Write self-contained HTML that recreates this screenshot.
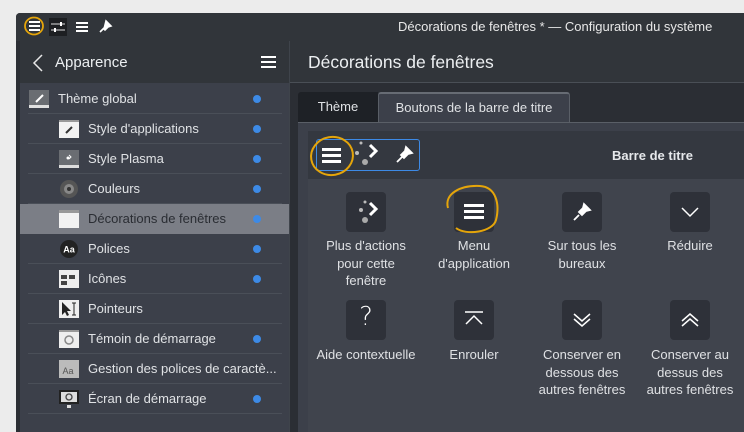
<!DOCTYPE html>
<html><head><meta charset="utf-8"><style>
*{margin:0;padding:0;box-sizing:border-box}
body{width:744px;height:432px;overflow:hidden;background:#ececec;font-family:"Liberation Sans","DejaVu Sans",sans-serif;color:#e0e2e5;position:relative}
.a{position:absolute}
.win{left:16px;top:13px;width:728px;height:419px;background:#2b2e34;border-radius:4px 0 0 0}
.tb{left:16px;top:13px;width:728px;height:28px;background:#31353a;border-radius:4px 0 0 0}
.sh{left:20px;top:41px;width:269px;height:42px;background:#31353a}
.mh{left:290px;top:41px;width:454px;height:42px;background:#31353a;border-bottom:1px solid #4a4f56}
.list{left:20px;top:83px;width:269px;height:349px;background:#3c404a}
.row{position:absolute;left:0;width:269px;height:30px;font-size:13px;line-height:30px}
.row .sep{position:absolute;left:8px;right:7px;bottom:0;height:1px;background:#4a4f58}
.row .t{position:absolute;top:0}
.dot{position:absolute;left:233px;top:11px;width:8px;height:8px;border-radius:50%;background:#3d8ae6}
.ic{position:absolute;top:6px;width:20px;height:18px}
.tile{position:absolute;width:40px;height:40px;background:#2e3139;border-radius:4px}
.lbl{position:absolute;width:92px;text-align:center;font-size:13px;line-height:17.5px;color:#dfe1e4}
</style></head><body>
<div class="a win"></div>
<div class="a tb"></div>
<svg class="a" style="left:20px;top:14px" width="100" height="26">
<ellipse cx="14" cy="12" rx="9" ry="8.5" fill="none" stroke="#e5a50a" stroke-width="1.8"/>
<g fill="#fff"><rect x="9" y="7" width="11" height="2"/><rect x="9" y="11" width="11" height="2"/><rect x="9" y="15" width="11" height="2"/></g>
<rect x="29" y="4" width="18" height="18" fill="#1d1f22"/>
<g stroke="#ddd" stroke-width="1"><line x1="31" y1="10" x2="45" y2="10"/><line x1="31" y1="16" x2="45" y2="16"/></g>
<rect x="40" y="8" width="2" height="4" fill="#fff"/><rect x="34" y="14" width="2" height="4" fill="#fff"/>
<g fill="#fff"><rect x="56" y="8" width="12" height="2"/><rect x="56" y="12" width="12" height="2"/><rect x="56" y="16" width="12" height="2"/></g>
<path d="M86 7l5 5-3 1-3 3-1-1z M84 14l-4 4" stroke="#fff" stroke-width="1.6" fill="#fff"/>
</svg>
<div class="a" style="left:398px;top:19px;font-size:13px;color:#e8e8e8;white-space:nowrap">Décorations de fenêtres * — Configuration du système</div>
<div class="a sh"></div>
<div class="a mh"></div>
<div class="a" style="left:289px;top:41px;width:1px;height:391px;background:#3f444b"></div>
<svg class="a" style="left:30px;top:53px" width="16" height="20"><path d="M12 2L4 10l8 8" fill="none" stroke="#e8e8e8" stroke-width="1.5"/></svg>
<div class="a" style="left:55px;top:54px;font-size:15px;color:#eceff1">Apparence</div>
<svg class="a" style="left:260px;top:55px" width="18" height="16"><g fill="#fff"><rect x="1" y="1" width="15" height="2"/><rect x="1" y="6" width="15" height="2"/><rect x="1" y="11" width="15" height="2"/></g></svg>
<div class="a" style="left:308px;top:52px;font-size:17.5px;color:#eceff1">Décorations de fenêtres</div>

<div class="a list">
<div class="row" style="top:1px"><svg class="ic" style="left:9px" viewBox="0 0 20 18"><rect width="20" height="18" fill="#6a6d72"/><rect y="15" width="20" height="3" fill="#e0e0e0"/><path d="M7 12l7-7" stroke="#fff" stroke-width="2"/></svg><span class="t" style="left:38px">Thème global</span><span class="dot"></span><span class="sep"></span></div>
<div class="row" style="top:31px"><svg class="ic" style="left:39px" viewBox="0 0 20 18"><rect width="20" height="18" fill="#f2f2f2"/><rect width="20" height="2" fill="#999"/><path d="M7 13l6-6" stroke="#333" stroke-width="2"/></svg><span class="t" style="left:68px">Style d'applications</span><span class="dot"></span><span class="sep"></span></div>
<div class="row" style="top:61px"><svg class="ic" style="left:39px" viewBox="0 0 20 18"><rect width="20" height="18" fill="#6a6d72"/><rect y="15" width="20" height="3" fill="#ddd"/><circle cx="9" cy="8" r="1.5" fill="#fff"/><path d="M10 5l2 2-2 2" stroke="#fff" fill="none"/></svg><span class="t" style="left:68px">Style Plasma</span><span class="dot"></span><span class="sep"></span></div>
<div class="row" style="top:91px"><svg class="ic" style="left:39px" viewBox="0 0 20 18"><circle cx="10" cy="9" r="9" fill="#555"/><circle cx="10" cy="9" r="5" fill="#888"/><circle cx="10" cy="9" r="2" fill="#333"/></svg><span class="t" style="left:68px">Couleurs</span><span class="dot"></span><span class="sep"></span></div>
<div class="row" style="top:121px;background:#7b7e86;color:#2a2d33"><svg class="ic" style="left:39px" viewBox="0 0 20 18"><rect width="20" height="18" fill="#f2f2f2"/><rect width="20" height="3" fill="#999"/></svg><span class="t" style="left:68px">Décorations de fenêtres</span><span class="dot"></span></div>
<div class="row" style="top:151px"><svg class="ic" style="left:39px" viewBox="0 0 20 18"><circle cx="10" cy="9" r="9" fill="#222"/><text x="10" y="12.5" font-size="9" text-anchor="middle" fill="#fff" font-family="Liberation Sans" font-weight="bold">Aa</text></svg><span class="t" style="left:68px">Polices</span><span class="dot"></span><span class="sep"></span></div>
<div class="row" style="top:181px"><svg class="ic" style="left:39px" viewBox="0 0 20 18"><rect width="20" height="18" fill="#eee"/><rect x="2" y="5" width="6" height="4" fill="#444"/><rect x="10" y="5" width="6" height="4" fill="#444"/><rect x="2" y="11" width="6" height="4" fill="#444"/></svg><span class="t" style="left:68px">Icônes</span><span class="dot"></span><span class="sep"></span></div>
<div class="row" style="top:211px"><svg class="ic" style="left:39px" viewBox="0 0 20 18"><rect width="20" height="18" fill="#eee"/><path d="M3 2v13l3-3 2 4 2-1-2-4h4z" fill="#222"/><path d="M15 3v12M13 3h4M13 15h4" stroke="#222"/></svg><span class="t" style="left:68px">Pointeurs</span><span class="sep"></span></div>
<div class="row" style="top:241px"><svg class="ic" style="left:39px" viewBox="0 0 20 18"><rect width="20" height="18" fill="#eee"/><rect width="20" height="2" fill="#999"/><circle cx="10" cy="10" r="4" fill="none" stroke="#888" stroke-width="1.5"/></svg><span class="t" style="left:68px">Témoin de démarrage</span><span class="dot"></span><span class="sep"></span></div>
<div class="row" style="top:271px"><svg class="ic" style="left:39px" viewBox="0 0 20 18"><rect width="20" height="18" fill="#bbb"/><text x="9" y="14" font-size="9" text-anchor="middle" fill="#555" font-family="Liberation Sans">Aa</text></svg><span class="t" style="left:68px">Gestion des polices de caractè...</span><span class="sep"></span></div>
<div class="row" style="top:301px"><svg class="ic" style="left:39px" viewBox="0 0 20 18"><rect width="20" height="14" fill="#222"/><rect x="2" y="2" width="16" height="10" fill="#ddd"/><circle cx="10" cy="7" r="3" fill="none" stroke="#444" stroke-width="1.3"/><rect x="8" y="15" width="4" height="3" fill="#ddd"/></svg><span class="t" style="left:68px">Écran de démarrage</span><span class="dot"></span><span class="sep"></span></div>
</div>

<div class="a" style="left:298px;top:92px;width:80px;height:30px;background:#1e2126;border-radius:3px 0 0 0;font-size:13px;line-height:30px;text-align:center">Thème</div>
<div class="a" style="left:378px;top:92px;width:192px;height:31px;background:#3c404a;border:1px solid #5a5f67;border-bottom:none;border-top:2px solid #676c74;border-radius:3px 3px 0 0;font-size:13px;line-height:28px;text-align:center">Boutons de la barre de titre</div>
<div class="a" style="left:298px;top:122px;width:446px;height:310px;background:#3c404a;border-top:1px solid #5a5f67"></div>
<div class="a" style="left:308px;top:131px;width:436px;height:301px;background:#40444d"></div>
<div class="a" style="left:308px;top:131px;width:436px;height:48px;background:#343840"></div>
<div class="a" style="left:316px;top:139px;width:104px;height:32px;border:1px solid #3d8ae6;border-radius:3px"></div>
<svg class="a" style="left:306px;top:133px" width="120" height="46">
<ellipse cx="26" cy="23" rx="21" ry="19" fill="none" stroke="#e5a50a" stroke-width="2" transform="rotate(-10 26 23)"/>
<g fill="#fff"><rect x="16" y="15" width="19" height="3"/><rect x="16" y="21" width="19" height="3"/><rect x="16" y="27" width="19" height="3"/></g>
<circle cx="55" cy="10" r="1.5" fill="#bbb"/><circle cx="51" cy="20" r="2" fill="#bbb"/><circle cx="59" cy="29" r="3" fill="#aaa"/>
<path d="M64 12l6 6-6 6" fill="none" stroke="#fff" stroke-width="3"/>
<path d="M100 14l6 6-4 1-4 4-3-3 4-4z M96 24l-5 5" stroke="#fff" stroke-width="1.8" fill="#fff"/>
</svg>
<div class="a" style="left:612px;top:148px;font-size:13px;font-weight:bold;color:#e6e8eb">Barre de titre</div>

<div class="tile" style="left:346px;top:192px"></div>
<div class="tile" style="left:454px;top:192px"></div>
<div class="tile" style="left:562px;top:192px"></div>
<div class="tile" style="left:670px;top:192px"></div>
<svg class="a" style="left:346px;top:192px" width="40" height="40"><circle cx="19" cy="10" r="1.5" fill="#bbb"/><circle cx="15" cy="18" r="2" fill="#bbb"/><circle cx="19" cy="28" r="3" fill="#aaa"/><path d="M24 11l6 6-6 6" fill="none" stroke="#fff" stroke-width="3"/></svg>
<svg class="a" style="left:440px;top:180px" width="66" height="60"><path d="M8 28C4 14 20 5 40 6c16 1 20 18 16 34-3 12-30 16-40 8" fill="none" stroke="#e5a50a" stroke-width="2"/><g fill="#fff"><rect x="24" y="24" width="20" height="3"/><rect x="24" y="30" width="20" height="3"/><rect x="24" y="36" width="20" height="3"/></g></svg>
<svg class="a" style="left:562px;top:192px" width="40" height="40"><path d="M22 12l6 6-4 1-4 4-3-3 4-4z M17 23l-5 5" stroke="#fff" stroke-width="1.8" fill="#fff"/></svg>
<svg class="a" style="left:670px;top:192px" width="40" height="40"><path d="M12 16l8 8 8-8" fill="none" stroke="#fff" stroke-width="1.5"/></svg>
<div class="lbl" style="left:320px;top:237px">Plus d'actions pour cette fenêtre</div>
<div class="lbl" style="left:428px;top:237px">Menu d'application</div>
<div class="lbl" style="left:536px;top:237px">Sur tous les bureaux</div>
<div class="lbl" style="left:644px;top:237px">Réduire</div>
<div class="tile" style="left:346px;top:300px"></div>
<div class="tile" style="left:454px;top:300px"></div>
<div class="tile" style="left:562px;top:300px"></div>
<div class="tile" style="left:670px;top:300px"></div>
<div class="a" style="left:346px;top:302px;width:40px;text-align:center;font-size:26px;color:#fff;font-family:'DejaVu Sans',sans-serif;font-weight:200">?</div>
<svg class="a" style="left:454px;top:300px" width="40" height="40"><path d="M11 12h18M12 24l8-8 8 8" fill="none" stroke="#fff" stroke-width="1.5"/></svg>
<svg class="a" style="left:562px;top:300px" width="40" height="40"><path d="M12 14l8 7 8-7M12 19l8 7 8-7" fill="none" stroke="#fff" stroke-width="1.5"/></svg>
<svg class="a" style="left:670px;top:300px" width="40" height="40"><path d="M12 21l8-7 8 7M12 26l8-7 8 7" fill="none" stroke="#fff" stroke-width="1.5"/></svg>
<div class="lbl" style="left:306px;top:346px;width:120px;white-space:nowrap">Aide contextuelle</div>
<div class="lbl" style="left:428px;top:346px">Enrouler</div>
<div class="lbl" style="left:536px;top:346px">Conserver en dessous des autres fenêtres</div>
<div class="lbl" style="left:644px;top:346px">Conserver au dessus des autres fenêtres</div>
</body></html>
